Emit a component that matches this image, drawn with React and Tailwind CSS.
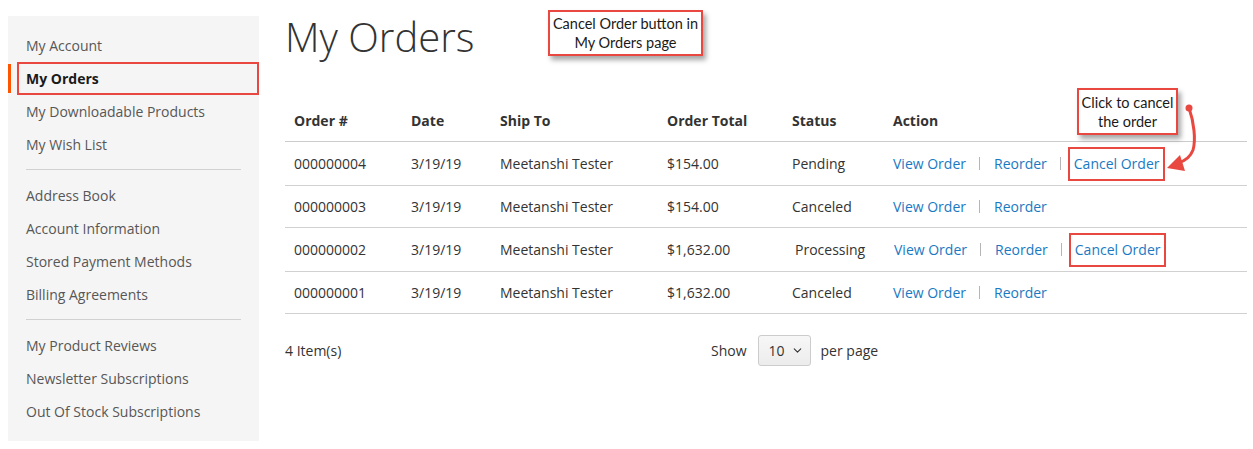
import { ChevronDown } from "lucide-react";

const navGroups = [
  ["My Account", "My Orders", "My Downloadable Products", "My Wish List"],
  ["Address Book", "Account Information", "Stored Payment Methods", "Billing Agreements"],
  ["My Product Reviews", "Newsletter Subscriptions", "Out Of Stock Subscriptions"],
];

const orders = [
  { id: "000000004", total: "$154.00", status: "Pending", cancel: true, h: "h-[44px]", statusPad: "pl-[9px]", actionPad: "pl-[9px]" },
  { id: "000000003", total: "$154.00", status: "Canceled", cancel: false, h: "h-[42px]", statusPad: "pl-[9px]", actionPad: "pl-[9px]" },
  { id: "000000002", total: "$1,632.00", status: "Processing", cancel: true, h: "h-[44px]", statusPad: "pl-[12px]", actionPad: "pl-[10px]" },
  { id: "000000001", total: "$1,632.00", status: "Canceled", cancel: false, h: "h-[42px]", statusPad: "pl-[9px]", actionPad: "pl-[9px]" },
];

const cols = "grid grid-cols-[117px_89px_167px_125px_101px_1fr] items-center";

const Sidebar = () => (
  <div className="w-[251px] h-[425px] mt-[16px] bg-[#f5f5f5] pt-[13px] shrink-0">
    {navGroups.map((group, gi) => (
      <div key={gi}>
        {gi > 0 && <div className="mx-[18px] mt-[8px] mb-[9px] h-px bg-[#d1d1d1]" />}
        {group.map((item) =>
          item === "My Orders" ? (
            <div key={item} className="relative h-[33px] flex items-center pl-[18px] font-bold text-[#1a1a1a]">
              <span className="absolute left-0 top-[1.5px] w-[3px] h-[29px] bg-[#ff5501]" />
              <span className="absolute left-[9px] right-0 top-0 bottom-0 border-2 border-[#e8483f]" />
              {item}
            </div>
          ) : (
            <div key={item} className="h-[33px] flex items-center pl-[18px] text-[#575757]">
              {item}
            </div>
          )
        )}
      </div>
    ))}
  </div>
);

const Sep = ({ className = "" }) => <span className={`w-px h-[13px] bg-[#b5b5b5] ${className}`} />;

const OrdersTable = () => (
  <div className="mt-[40px]">
    <div className={`${cols} h-[42px] border-b border-[#cccccc] font-bold text-[#333]`}>
      {["Order #", "Date", "Ship To", "Order Total", "Status", "Action"].map((h) => (
        <div key={h} className="pl-[9px]">{h}</div>
      ))}
    </div>
    {orders.map((o) => (
      <div key={o.id} className={`${cols} ${o.h} border-b border-[#d1d1d1] text-[#333]`}>
        <div className="pl-[9px]">{o.id}</div>
        <div className="pl-[9px]">3/19/19</div>
        <div className="pl-[9px]">Meetanshi Tester</div>
        <div className="pl-[9px]">{o.total}</div>
        <div className={o.statusPad}>{o.status}</div>
        <div className={`${o.actionPad} flex items-center text-[#1979c3]`}>
          <span>View Order</span>
          <Sep className="ml-[13px] mr-[14px]" />
          <span>Reorder</span>
          {o.cancel && (
            <>
              <Sep className="ml-[13px] mr-[7px]" />
              <span className="border-2 border-[#e8483f] px-[4px] py-[5px] leading-[20px]">Cancel Order</span>
            </>
          )}
        </div>
      </div>
    ))}
  </div>
);

const Toolbar = () => (
  <div className="mt-[21px] flex items-center h-[31px] text-[#333]">
    <div className="w-[426px]">4 Item(s)</div>
    <span>Show</span>
    <div className="ml-[11px] w-[53px] h-[31px] rounded-[3px] border border-[#cccccc] bg-gradient-to-b from-[#f7f7f7] to-[#ececec] flex items-center pl-[10px] gap-[6px]">
      <span>10</span>
      <ChevronDown size={13} strokeWidth={2} className="text-[#333]" />
    </div>
    <span className="ml-[10px]">per page</span>
  </div>
);

const Note = ({ className, children }) => (
  <div
    className={`absolute bg-white border-2 border-[#e8483f] shadow-[3px_4px_5px_rgba(0,0,0,0.35)] text-center text-[#1a1a1a] text-[14.5px] leading-[19px] ${className}`}
    style={{ fontFamily: "Lato, 'Liberation Sans', sans-serif" }}
  >
    {children}
  </div>
);

export default function App() {
  return (
    <div
      className="relative w-[1253px] h-[449px] bg-white text-[14px] overflow-hidden"
      style={{ fontFamily: "'Open Sans', 'Noto Sans', sans-serif" }}
    >
      <div className="flex pl-[8px]">
        <Sidebar />
        <div className="ml-[26px] w-[962px]">
          <h1 className="mt-[14px] h-[46px] leading-[46px] text-[40px] font-light text-[#333]">My Orders</h1>
          <OrdersTable />
          <Toolbar />
        </div>
      </div>

      <Note className="left-[548px] top-[10px] w-[155px] h-[46px] pt-[2px]">
        Cancel Order button in
        <br />
        My Orders page
      </Note>
      <Note className="left-[1077px] top-[88px] w-[101px] h-[47px] pt-[3px]">
        Click to cancel
        <br />
        the order
      </Note>

      <svg className="absolute left-0 top-0" width="1253" height="449" viewBox="0 0 1253 449" fill="none">
        <circle cx="1189" cy="108" r="3.5" fill="#e8483f" />
        <path d="M1189 108 C1194 122 1196 140 1193 150 C1190 158 1185 161 1178 163" stroke="#e8483f" strokeWidth="3" strokeLinecap="round" />
        <path d="M1167 168 L1180 155 L1185 171 Z" fill="#e8483f" />
      </svg>
    </div>
  );
}
